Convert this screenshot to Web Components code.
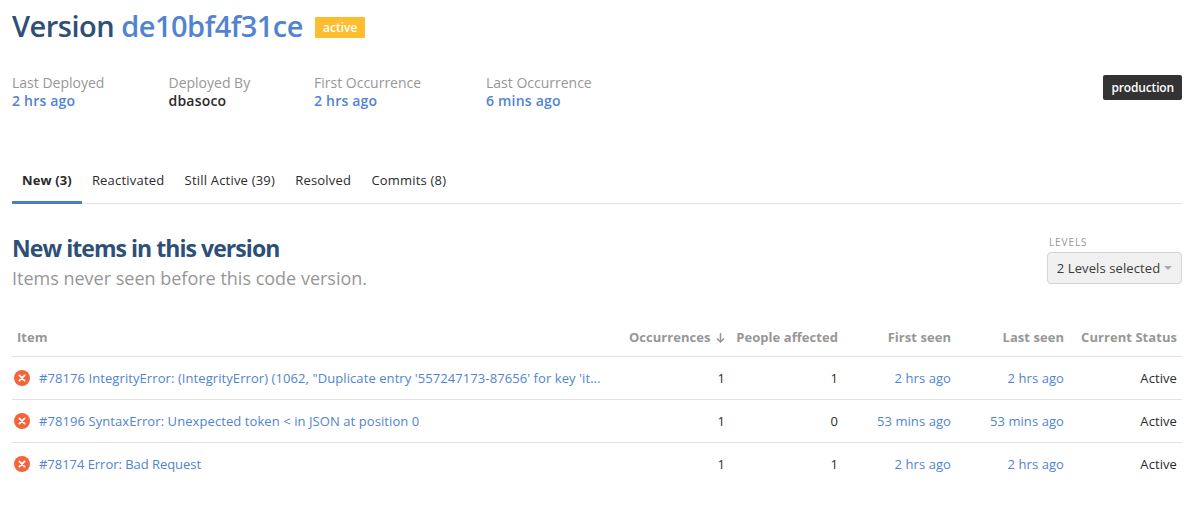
<!DOCTYPE html>
<html>
<head>
<meta charset="utf-8">
<style>
  html, body { margin: 0; background: #fff; }
  body { font-family: "Open Sans", sans-serif; color: #2b2b2b; }
</style>
</head>
<body>
<version-page></version-page>

<script>
const LINK = '#5084d2';
const COLUMNS = 'grid-template-columns: 1fr 113px 113px 113px 113px 113px;';

class VersionTitle extends HTMLElement {
  constructor() {
    super();
    this.attachShadow({ mode: 'open' }).innerHTML = `
      <style>
        :host { display: flex; align-items: center; height: 54px; }
        h1 { margin: 0 0 2px; font-size: 29px; line-height: 52px; font-weight: 600; color: #2e5077; letter-spacing: -0.5px; white-space: nowrap; }
        h1 span { color: ${LINK}; }
        .badge { margin-left: 12px; background: #fdbd2e; color: #fff; font-size: 12px; font-weight: 600; line-height: 21px; padding: 0 8px; border-radius: 1px; }
      </style>
      <h1>Version <span>de10bf4f31ce</span></h1>
      <div class="badge">active</div>`;
  }
}
customElements.define('version-title', VersionTitle);

class MetaItem extends HTMLElement {
  constructor() {
    super();
    this.attachShadow({ mode: 'open' }).innerHTML = `
      <style>
        :host { display: block; font-size: 14px; line-height: 18px; }
        .label { color: #979797; }
        .value { font-weight: 600; color: ${LINK}; letter-spacing: 0.2px; }
        :host([plain]) .value { color: #2b2b2b; }
      </style>
      <div class="label">${this.getAttribute('label')}</div>
      <div class="value"><slot></slot></div>`;
  }
}
customElements.define('meta-item', MetaItem);

class TabBar extends HTMLElement {
  constructor() {
    super();
    this.attachShadow({ mode: 'open' }).innerHTML = `
      <style>
        :host { display: flex; border-bottom: 1px solid #e2e2e2; height: 46px; }
      </style>
      <slot></slot>`;
  }
}
customElements.define('tab-bar', TabBar);

class TabItem extends HTMLElement {
  constructor() {
    super();
    this.attachShadow({ mode: 'open' }).innerHTML = `
      <style>
        :host { display: block; padding: 0 10px 0 10.2px; font-size: 13px; letter-spacing: 0.2px; line-height: 47px; height: 46px; box-sizing: border-box; color: #2b2b2b; }
        :host([active]) { padding: 0 10px; letter-spacing: 0.1px; font-weight: 700; border-bottom: 3px solid #4a7fc1; height: 47px; }
      </style>
      <slot></slot>`;
  }
}
customElements.define('tab-item', TabItem);

class LevelSelect extends HTMLElement {
  constructor() {
    super();
    this.attachShadow({ mode: 'open' }).innerHTML = `
      <style>
        :host { display: block; width: 135px; padding-top: 4px; }
        .label { font-size: 10px; line-height: 12px; letter-spacing: 0.9px; color: #979797; margin-bottom: 4px; padding-left: 2px; }
        .box { display: flex; align-items: center; justify-content: center; gap: 4px; height: 32px; box-sizing: border-box; border: 1px solid #d4d4d4; border-radius: 4px; background: #f0f0f0; font-size: 13px; letter-spacing: 0.1px; color: #3a3a3a; }
        .caret { width: 0; height: 0; border-left: 4px solid transparent; border-right: 4px solid transparent; border-top: 4px solid #a8a8a8; }
      </style>
      <div class="label">LEVELS</div>
      <div class="box"><span>2 Levels selected</span><i class="caret"></i></div>`;
  }
}
customElements.define('level-select', LevelSelect);

class ItemHead extends HTMLElement {
  constructor() {
    super();
    this.attachShadow({ mode: 'open' }).innerHTML = `
      <style>
        :host { display: grid; ${COLUMNS} align-items: center; height: 38px; padding-top: 6px; border-bottom: 1px solid #e2e2e2; font-size: 13px; font-weight: 700; letter-spacing: 0.05px; color: #979797; }
        div { text-align: right; padding-right: 5px; white-space: nowrap; }
        div.first { text-align: left; padding-left: 5px; }
        svg { width: 9px; height: 11px; margin-left: 2px; vertical-align: -1px; }
      </style>
      <div class="first">Item</div>
      <div>Occurrences <svg viewBox="0 0 9 11"><path d="M4.5 1v9M1 6.5l3.5 3.5L8 6.5" fill="none" stroke="#979797" stroke-width="1.5"/></svg></div>
      <div>People affected</div>
      <div>First seen</div>
      <div>Last seen</div>
      <div>Current Status</div>`;
  }
}
customElements.define('item-head', ItemHead);

class ItemRow extends HTMLElement {
  constructor() {
    super();
    const a = n => this.getAttribute(n);
    this.attachShadow({ mode: 'open' }).innerHTML = `
      <style>
        :host { display: grid; ${COLUMNS} align-items: center; height: 42px; border-bottom: 1px solid #e2e2e2; font-size: 13px; letter-spacing: 0.08px; color: #2b2b2b; }
        :host(:last-child) { border-bottom: 0; }
        .item { display: flex; align-items: center; padding-left: 1.5px; color: ${LINK}; white-space: nowrap; }
        .item span { letter-spacing: ${a('track') || '0.08px'}; }
        svg { width: 16px; height: 16px; margin-right: 9.5px; flex: none; }
        .num { text-align: right; padding-right: 5px; white-space: nowrap; }
        .link { color: ${LINK}; }
      </style>
      <div class="item">
        <svg viewBox="0 0 16 16"><circle cx="8" cy="8" r="8" fill="#f5633a"/><path d="M5.4 5.4l5.2 5.2M10.6 5.4l-5.2 5.2" stroke="#fff" stroke-width="1.8" stroke-linecap="round"/></svg>
        <span><slot></slot></span>
      </div>
      <div class="num">${a('occ')}</div>
      <div class="num">${a('people')}</div>
      <div class="num link">${a('first')}</div>
      <div class="num link">${a('last')}</div>
      <div class="num">Active</div>`;
  }
}
customElements.define('item-row', ItemRow);

class VersionPage extends HTMLElement {
  constructor() {
    super();
    this.attachShadow({ mode: 'open' }).innerHTML = `
      <style>
        :host { display: block; padding: 0 18px 0 12px; }
        .meta { display: flex; align-items: flex-start; margin-top: 20px; height: 36px; }
        meta-item:nth-child(1) { width: 156.5px; }
        meta-item:nth-child(2) { width: 145.5px; }
        meta-item:nth-child(3) { width: 172px; }
        .env { margin-left: auto; margin-top: 1px; background: #333; color: #fff; font-size: 12px; font-weight: 600; letter-spacing: -0.15px; line-height: 25px; padding: 0 8px; border-radius: 2px; }
        tab-bar { margin-top: 47px; }
        .section { display: flex; justify-content: space-between; align-items: flex-start; margin-top: 28px; }
        h2 { margin: 0; padding-top: 1px; font-size: 23px; line-height: 30px; font-weight: 700; color: #2e5077; letter-spacing: -0.95px; }
        p { margin: 0; font-size: 18px; line-height: 30px; color: #979797; }
        item-head { margin-top: 19px; }
      </style>
      <version-title></version-title>
      <div class="meta">
        <meta-item label="Last Deployed">2 hrs ago</meta-item>
        <meta-item label="Deployed By" plain>dbasoco</meta-item>
        <meta-item label="First Occurrence">2 hrs ago</meta-item>
        <meta-item label="Last Occurrence">6 mins ago</meta-item>
        <div class="env">production</div>
      </div>
      <tab-bar>
        <tab-item active>New (3)</tab-item>
        <tab-item>Reactivated</tab-item>
        <tab-item>Still Active (39)</tab-item>
        <tab-item>Resolved</tab-item>
        <tab-item>Commits (8)</tab-item>
      </tab-bar>
      <div class="section">
        <div>
          <h2>New items in this version</h2>
          <p>Items never seen before this code version.</p>
        </div>
        <level-select></level-select>
      </div>
      <item-head></item-head>
      <section>
        <item-row occ="1" people="1" first="2 hrs ago" last="2 hrs ago">#78176 IntegrityError: (IntegrityError) (1062, "Duplicate entry '557247173-87656' for key 'it...</item-row>
        <item-row occ="1" people="0" first="53 mins ago" last="53 mins ago">#78196 SyntaxError: Unexpected token &lt; in JSON at position 0</item-row>
        <item-row occ="1" people="1" first="2 hrs ago" last="2 hrs ago" track="-0.04px">#78174 Error: Bad Request</item-row>
      </section>`;
  }
}
customElements.define('version-page', VersionPage);
</script>
</body>
</html>
